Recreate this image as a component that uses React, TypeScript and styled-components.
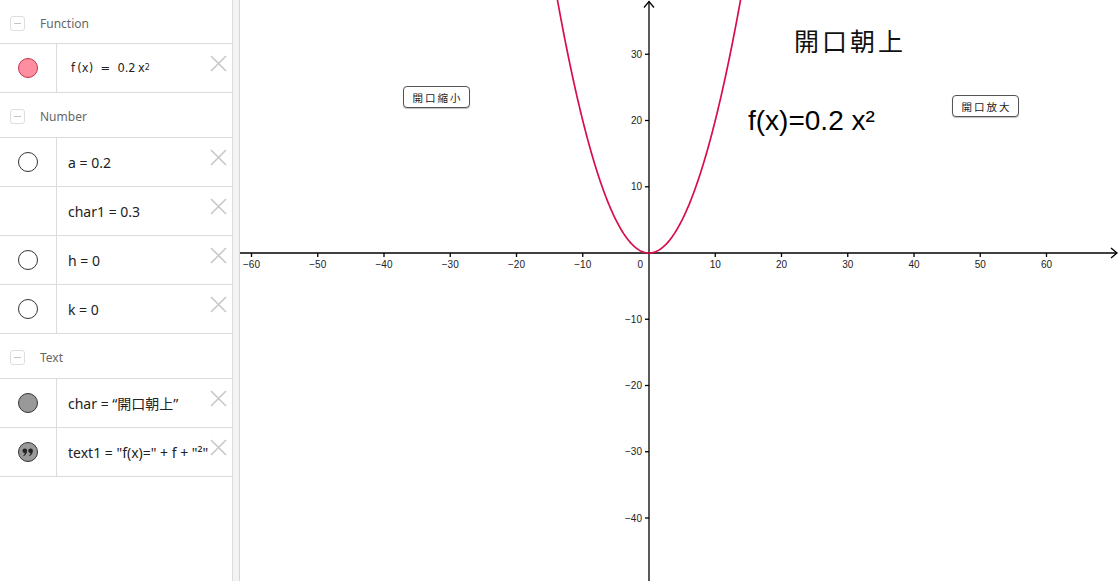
import { Fragment } from "react";
import styled, { createGlobalStyle } from "styled-components";

const GlobalStyle = createGlobalStyle`
  html, body {
    margin: 0;
    padding: 0;
    background: #fff;
  }
  body {
    font-family: "Noto Sans", "Noto Sans CJK TC", sans-serif;
  }
`;

// graphics view geometry (px inside the view)
const VIEW_W = 880;
const VIEW_H = 581;
const ORIGIN_X = 409;
const ORIGIN_Y = 253;
const SCALE = 6.625;

const Page = styled.div`
  display: flex;
  width: 1120px;
  height: 581px;
  overflow: hidden;
`;

const AlgebraPanel = styled.div`
  width: 233px;
  flex: none;
  display: flex;
  flex-direction: column;
  box-sizing: border-box;
  border-right: 1px solid #dcdcdc;
  overflow: hidden;
`;

const Splitter = styled.div`
  width: 7px;
  flex: none;
  background: #f3f3f3;
  border-right: 1px solid #d6d6d6;
  box-sizing: border-box;
`;

const GroupHeader = styled.div`
  height: 45px;
  flex: none;
  display: flex;
  align-items: center;
  box-sizing: border-box;
  border-bottom: 1px solid #dcdcdc;
  padding: 3px 0 0 10px;
  gap: 15px;

  &:first-child {
    height: 44px;
  }
`;

const CollapseBox = styled.div`
  width: 15px;
  height: 15px;
  box-sizing: border-box;
  border: 1px solid #dedede;
  border-radius: 3px;
  display: flex;
  align-items: center;
  justify-content: center;

  &::after {
    content: "";
    width: 7px;
    height: 1px;
    background: #c4c4c4;
  }
`;

const GroupLabel = styled.span`
  font-size: 12px;
  color: #666;
`;

const ItemRow = styled.div`
  height: 49px;
  flex: none;
  display: flex;
  position: relative;
  box-sizing: border-box;
  border-bottom: 1px solid #dcdcdc;
`;

const MarbleCell = styled.div`
  width: 57px;
  flex: none;
  box-sizing: border-box;
  border-right: 1px solid #dcdcdc;
  display: flex;
  align-items: center;
  justify-content: center;
  padding-right: 1px;
`;

const Marble = styled.div<{ $fill: string; $stroke: string }>`
  width: 20px;
  height: 20px;
  box-sizing: border-box;
  border-radius: 50%;
  background: ${(p) => p.$fill};
  border: 1px solid ${(p) => p.$stroke};
`;

const Definition = styled.div<{ $math?: boolean }>`
  flex: 1;
  display: flex;
  align-items: center;
  padding-left: ${(p) => (p.$math ? "14px" : "11px")};
  font-family: ${(p) =>
    p.$math
      ? `"DejaVu Sans", "Liberation Sans", sans-serif`
      : `"Noto Sans", "Noto Sans CJK TC", sans-serif`};
  font-size: ${(p) => (p.$math ? "11.5px" : "14px")};
  color: #222;
  white-space: nowrap;
  overflow: hidden;

  sup {
    font-size: 8px;
    position: relative;
    top: -1px;
  }
`;

const DeleteButton = styled.div`
  position: absolute;
  right: 5px;
  top: 50%;
  width: 17px;
  height: 17px;
  margin-top: -13px;
  background: #fff;
  display: flex;
`;

const GraphicsView = styled.div`
  flex: 1;
  position: relative;
  background: #fff;
`;

const GraphSvg = styled.svg`
  display: block;
  width: ${VIEW_W}px;
  height: ${VIEW_H}px;
`;

const CanvasButton = styled.div<{ $left: number; $top: number }>`
  position: absolute;
  left: ${(p) => p.$left}px;
  top: ${(p) => p.$top}px;
  width: 67px;
  height: 22px;
  box-sizing: border-box;
  border: 1.5px solid #555;
  border-radius: 4px;
  background: #fff;
  box-shadow: 0 1px 1px rgba(0, 0, 0, 0.25);
  display: flex;
  align-items: center;
  justify-content: center;
  font-family: "Noto Sans CJK TC", sans-serif;
  font-size: 10.5px;
  letter-spacing: 2px;
  padding-left: 2px;
  color: #222;
`;

const CanvasTitle = styled.div`
  position: absolute;
  left: 554px;
  top: 26px;
  font-family: "Noto Sans CJK TC", sans-serif;
  font-size: 25px;
  line-height: 28px;
  letter-spacing: 3px;
  color: #111;
`;

const CanvasFormula = styled.div`
  position: absolute;
  left: 508px;
  top: 105px;
  font-family: "Liberation Sans", Arial, sans-serif;
  font-size: 28px;
  line-height: 32px;
  color: #000;
`;

const CloseIcon = () => (
  <svg width="17" height="17" viewBox="0 0 17 17">
    <path d="M1 1 L16 16 M16 1 L1 16" stroke="#c8c8c8" strokeWidth="1.6" fill="none" />
  </svg>
);

const QuoteMarble = () => (
  <svg width="20" height="20" viewBox="0 0 20 20">
    <circle cx="10" cy="10" r="9.5" fill="#999" stroke="#333" strokeWidth="1" />
    <circle cx="6.8" cy="8.8" r="2.3" fill="#222" />
    <path d="M8.9 9 Q8.9 12.5 5.6 14.2 L5.4 13.5 Q7 12 6.8 10.8 Z" fill="#222" />
    <circle cx="12.6" cy="8.8" r="2.3" fill="#222" />
    <path d="M14.7 9 Q14.7 12.5 11.4 14.2 L11.2 13.5 Q12.8 12 12.6 10.8 Z" fill="#222" />
  </svg>
);

type Item = {
  marble: "function" | "open" | "none" | "text" | "quote";
  math?: boolean;
  content: React.ReactNode;
};

type Group = { label: string; items: Item[] };

const groups: Group[] = [
  {
    label: "Function",
    items: [
      {
        marble: "function",
        math: true,
        content: (
          <>
            f&thinsp;(x)&nbsp;&nbsp;=&nbsp;&nbsp;0.2&thinsp;x<sup>2</sup>
          </>
        ),
      },
    ],
  },
  {
    label: "Number",
    items: [
      { marble: "open", content: "a = 0.2" },
      { marble: "none", content: "char1 = 0.3" },
      { marble: "open", content: "h = 0" },
      { marble: "open", content: "k = 0" },
    ],
  },
  {
    label: "Text",
    items: [
      { marble: "text", content: "char = “開口朝上”" },
      { marble: "quote", content: 'text1 = "f(x)=" + f + "²"' },
    ],
  },
];

const renderMarble = (kind: Item["marble"]) => {
  switch (kind) {
    case "function":
      return <Marble $fill="#ff8fa0" $stroke="#c2304a" />;
    case "open":
      return <Marble $fill="#fff" $stroke="#333" />;
    case "text":
      return <Marble $fill="#999" $stroke="#333" />;
    case "quote":
      return <QuoteMarble />;
    default:
      return null;
  }
};

const toX = (u: number) => ORIGIN_X + u * SCALE;
const toY = (u: number) => ORIGIN_Y - u * SCALE;
const minus = (n: number) => (n < 0 ? `\u2212${Math.abs(n)}` : `${n}`);

const parabolaPath = () => {
  const pts: string[] = [];
  for (let u = -14.5; u <= 14.5; u += 0.1) {
    pts.push(`${toX(u).toFixed(2)},${toY(0.2 * u * u).toFixed(2)}`);
  }
  return "M" + pts.join(" L");
};

const xTicks = [-60, -50, -40, -30, -20, -10, 10, 20, 30, 40, 50, 60];
const yTicks = [30, 20, 10, -10, -20, -30, -40];

const Graph = () => (
  <GraphSvg viewBox={`0 0 ${VIEW_W} ${VIEW_H}`}>
    <g stroke="#000" strokeWidth="1.3" fill="none">
      <line x1="0" y1={ORIGIN_Y} x2={VIEW_W - 3} y2={ORIGIN_Y} />
      <path d={`M${VIEW_W - 9} ${ORIGIN_Y - 5} L${VIEW_W - 3} ${ORIGIN_Y} L${VIEW_W - 9} ${ORIGIN_Y + 5}`} />
      <line x1={ORIGIN_X} y1="1.5" x2={ORIGIN_X} y2={VIEW_H} />
      <path d={`M${ORIGIN_X - 5} 7.5 L${ORIGIN_X} 1.5 L${ORIGIN_X + 5} 7.5`} />
      {xTicks.map((t) => (
        <line key={`xt${t}`} x1={toX(t)} y1={ORIGIN_Y} x2={toX(t)} y2={ORIGIN_Y + 4} />
      ))}
      {yTicks.map((t) => (
        <line key={`yt${t}`} x1={ORIGIN_X - 4} y1={toY(t)} x2={ORIGIN_X} y2={toY(t)} />
      ))}
    </g>
    <g fontFamily="'Liberation Sans', Arial, sans-serif" fontSize="10" fill="#222">
      {xTicks.map((t) => (
        <text key={`xl${t}`} x={toX(t)} y={ORIGIN_Y + 15} textAnchor="middle">
          {minus(t)}
        </text>
      ))}
      {yTicks.map((t) => (
        <text key={`yl${t}`} x={ORIGIN_X - 7} y={toY(t) + 3.6} textAnchor="end">
          {minus(t)}
        </text>
      ))}
      <text x={ORIGIN_X - 6} y={ORIGIN_Y + 15} textAnchor="end">
        0
      </text>
    </g>
    <path d={parabolaPath()} stroke="#d80e4a" strokeWidth="1.7" fill="none" />
  </GraphSvg>
);

export default function App() {
  return (
    <>
      <GlobalStyle />
      <Page>
        <AlgebraPanel>
          {groups.map((g) => (
            <Fragment key={g.label}>
              <GroupHeader>
                <CollapseBox />
                <GroupLabel>{g.label}</GroupLabel>
              </GroupHeader>
              {g.items.map((item, i) => (
                <ItemRow key={i}>
                  <MarbleCell>{renderMarble(item.marble)}</MarbleCell>
                  <Definition $math={item.math}>{item.content}</Definition>
                  <DeleteButton>
                    <CloseIcon />
                  </DeleteButton>
                </ItemRow>
              ))}
            </Fragment>
          ))}
        </AlgebraPanel>
        <Splitter />
        <GraphicsView>
          <Graph />
          <CanvasButton $left={163} $top={86}>開口縮小</CanvasButton>
          <CanvasButton $left={712} $top={95}>開口放大</CanvasButton>
          <CanvasTitle>開口朝上</CanvasTitle>
          <CanvasFormula>f(x)=0.2 x²</CanvasFormula>
        </GraphicsView>
      </Page>
    </>
  );
}
